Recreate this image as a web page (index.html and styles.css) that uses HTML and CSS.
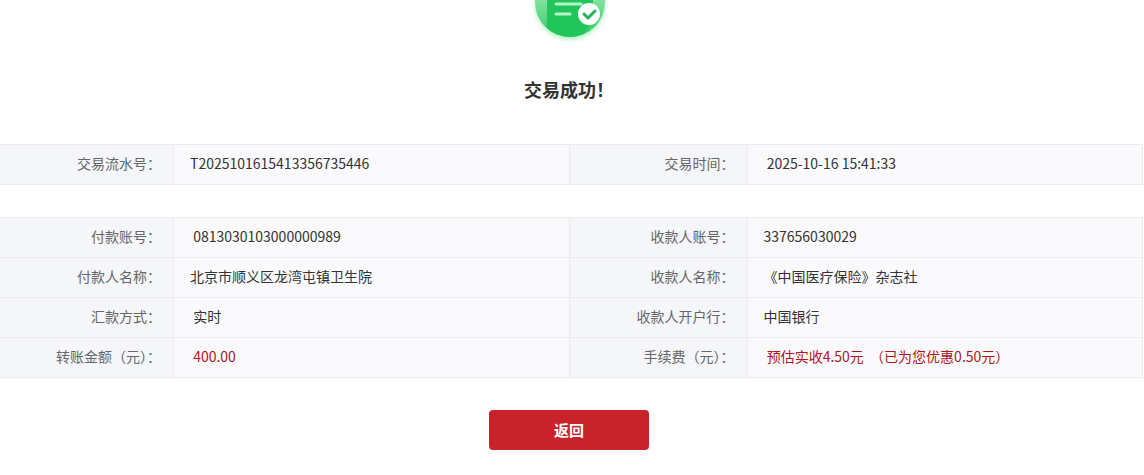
FILE: index.html
```
<!DOCTYPE html>
<html lang="zh-CN">
<head>
    <meta charset="UTF-8">
    <title>交易成功</title>
    <link rel="stylesheet" href="styles.css">
</head>
<body>
    <div class="result">
        <svg class="icon" width="90" height="44" viewBox="-1 0 90 44" aria-hidden="true">
            <defs>
                <linearGradient id="side" x1="0" y1="0" x2="0" y2="1">
                    <stop offset="0.4" stop-color="#8ee5a9"/>
                    <stop offset="1" stop-color="#2fc860"/>
                </linearGradient>
                <clipPath id="round"><circle cx="45" cy="2" r="35"/></clipPath>
                <filter id="glow" x="-20%" y="-20%" width="140%" height="140%"><feGaussianBlur stdDeviation="2"/></filter>
            </defs>
            <circle cx="45" cy="5" r="35" fill="#b9f2c8" filter="url(#glow)"/>
            <g clip-path="url(#round)">
                <rect x="9" y="-34" width="72" height="72" fill="url(#side)"/>
                <path d="M22 -34H68V20L56 38H22Z" fill="#22c55a"/>
            </g>
            <path d="M31 4H56M31 14H45" stroke="#b5f5c7" stroke-width="3" stroke-linecap="round"/>
            <circle cx="64" cy="14" r="11" fill="#fff"/>
            <path d="M59 14L63 18L70 11" fill="none" stroke="#22b558" stroke-width="3" stroke-linecap="round" stroke-linejoin="round"/>
        </svg>
        <h1>交易成功！</h1>

        <table>
            <tr>
                <th scope="row">交易流水号：</th>
                <td>T2025101615413356735446</td>
                <th scope="row">交易时间：</th>
                <td>&nbsp;2025-10-16 15:41:33</td>
            </tr>
        </table>

        <table>
            <tr>
                <th scope="row">付款账号：</th>
                <td>&nbsp;0813030103000000989</td>
                <th scope="row">收款人账号：</th>
                <td>337656030029</td>
            </tr>
            <tr>
                <th scope="row">付款人名称：</th>
                <td>北京市顺义区龙湾屯镇卫生院</td>
                <th scope="row">收款人名称：</th>
                <td>《中国医疗保险》杂志社</td>
            </tr>
            <tr>
                <th scope="row">汇款方式：</th>
                <td>&nbsp;实时</td>
                <th scope="row">收款人开户行：</th>
                <td>中国银行</td>
            </tr>
            <tr>
                <th scope="row">转账金额（元）：</th>
                <td class="red">&nbsp;400.00</td>
                <th scope="row">手续费（元）：</th>
                <td class="red">&nbsp;预估实收4.50元&nbsp;&nbsp;（已为您优惠0.50元）</td>
            </tr>
        </table>

        <button class="back" type="button">返回</button>
    </div>
</body>
</html>
```
FILE: styles.css
```
body {margin: 0;background: #fff;color: #333;font-family: "Noto Sans CJK SC", sans-serif;font-size: 14px;line-height: 20px;overflow-x: hidden;}
.result {display: flex;flex-direction: column;align-items: center;margin-left: -5px;margin-right: 1px;}
.icon {display: block;}
h1 {margin: 31px 0 41px;font-size: 18px;line-height: 28px;font-weight: bold;}
table {width: 100%;table-layout: fixed;border-collapse: collapse;margin-bottom: 32px;}
th, td {height: 35px;padding: 0 0 4px;border: 1px solid #ebebed;}
th {width: 165px;padding-right: 12px;background: #f4f6fa;color: #666;font-weight: normal;text-align: right;}
td {padding-left: 16px;background: #fafafc;text-align: left;}
.red {color: #b0141c;}
.back {width: 160px;height: 40px;padding: 0 0 2px;border: 0;border-radius: 4px;background: #c8232b;color: #fff;font-family: inherit;font-size: 15px;font-weight: bold;cursor: pointer;}
```
